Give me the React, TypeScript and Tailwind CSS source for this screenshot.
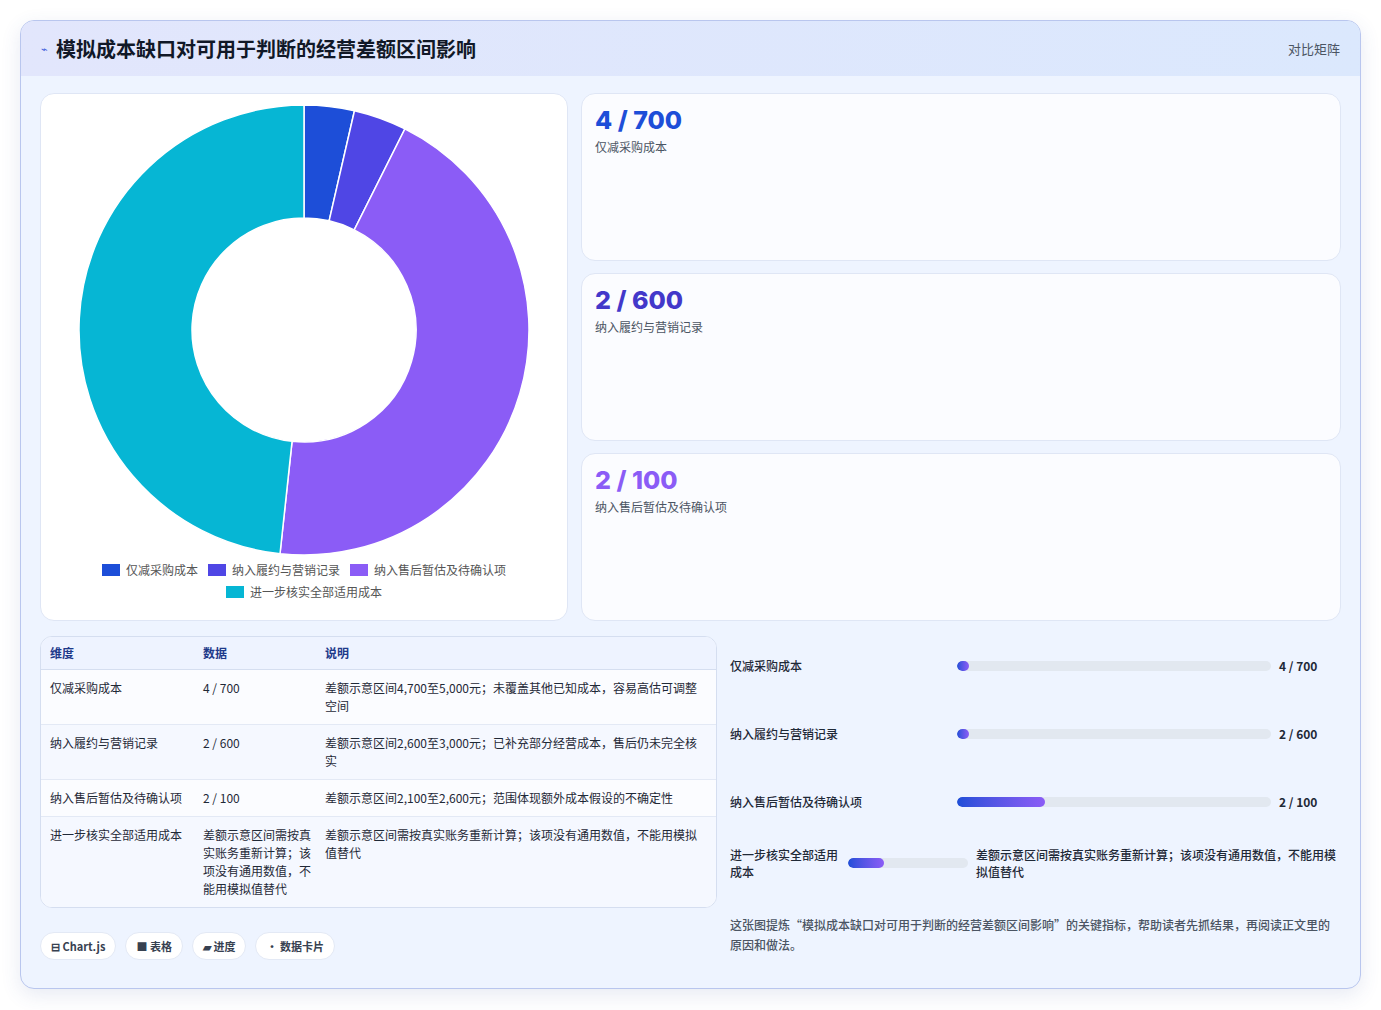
import React from "react";

const F = { fontFamily: '"Noto Sans CJK SC", "Noto Sans", sans-serif' };

function Donut() {
  const cx = 225, cy = 225, R = 225, r = 112;
  const parts = [
    { v: 3.6, c: "#1d4ed8" },
    { v: 3.8, c: "#4f46e5" },
    { v: 44.3, c: "#8b5cf6" },
    { v: 48.3, c: "#06b6d4" },
  ];
  let acc = 0;
  const pt = (a: number, rad: number) => [cx + rad * Math.sin(a), cy - rad * Math.cos(a)];
  return (
    <svg width="450" height="450" viewBox="0 0 450 450">
      {parts.map((p, i) => {
        const a0 = (acc / 100) * Math.PI * 2;
        acc += p.v;
        const a1 = (acc / 100) * Math.PI * 2;
        const large = a1 - a0 > Math.PI ? 1 : 0;
        const [x0, y0] = pt(a0, R), [x1, y1] = pt(a1, R), [x2, y2] = pt(a1, r), [x3, y3] = pt(a0, r);
        return (
          <path key={i} fill={p.c} stroke="#fff" strokeWidth="1.5"
            d={`M${x0},${y0} A${R},${R} 0 ${large} 1 ${x1},${y1} L${x2},${y2} A${r},${r} 0 ${large} 0 ${x3},${y3} Z`} />
        );
      })}
    </svg>
  );
}

const cards = [
  { v: "4 / 700", l: "仅减采购成本", c: "text-[#1d4ed8]" },
  { v: "2 / 600", l: "纳入履约与营销记录", c: "text-[#4338ca]" },
  { v: "2 / 100", l: "纳入售后暂估及待确认项", c: "text-[#8b5cf6]" },
];

const rows = [
  ["仅减采购成本", "4 / 700", "差额示意区间4,700至5,000元；未覆盖其他已知成本，容易高估可调整空间"],
  ["纳入履约与营销记录", "2 / 600", "差额示意区间2,600至3,000元；已补充部分经营成本，售后仍未完全核实"],
  ["纳入售后暂估及待确认项", "2 / 100", "差额示意区间2,100至2,600元；范围体现额外成本假设的不确定性"],
  ["进一步核实全部适用成本", "差额示意区间需按真实账务重新计算；该项没有通用数值，不能用模拟值替代", "差额示意区间需按真实账务重新计算；该项没有通用数值，不能用模拟值替代"],
];

export default function App() {
  return (
    <div style={F} className="w-[1381px] h-[1010px] bg-white pt-[20px] px-[20px]">
      <div className="w-[1341px] h-[969px] rounded-[14px] border border-[#b9c6ee] bg-[#eef4ff] overflow-hidden shadow-[0_6px_20px_rgba(60,80,160,0.12)]">
        <div className="h-[55px] flex items-center justify-between px-[20px] bg-gradient-to-r from-[#e2e6fc] to-[#dbe8fd]">
          <div className="flex items-center gap-[8px]">
            <span className="text-[#3b5bdb] text-[11px]">⌁</span>
            <span className="text-[20px] font-bold text-[#111827]">模拟成本缺口对可用于判断的经营差额区间影响</span>
          </div>
          <span className="text-[13px] text-[#4b5563]">对比矩阵</span>
        </div>
        <div className="px-[19px] pt-[17px]">
          <div className="flex gap-[13px]">
            <div className="w-[528px] h-[528px] bg-white rounded-[14px] border border-[#dfe6f5] flex flex-col items-center pt-[11px]">
              <Donut />
              <div className="mt-[6px] flex flex-wrap justify-center gap-x-[10px] gap-y-[4px] w-[440px] text-[12px] text-[#555]">
                {[["#1d4ed8", "仅减采购成本"], ["#4f46e5", "纳入履约与营销记录"], ["#8b5cf6", "纳入售后暂估及待确认项"], ["#06b6d4", "进一步核实全部适用成本"]].map(([c, t]) => (
                  <span key={t} className="flex items-center gap-[6px] h-[18px]">
                    <span className="w-[18px] h-[12px]" style={{ background: c }} />{t}
                  </span>
                ))}
              </div>
            </div>
            <div className="flex-1 flex flex-col gap-[12px]">
              {cards.map((c) => (
                <div key={c.v} className="h-[168px] bg-[#fbfcff] rounded-[14px] border border-[#dfe6f5] px-[13px] pt-[10px]">
                  <div className={`text-[25px] font-extrabold leading-[32px] ${c.c}`} style={{ fontFamily: "Inter, sans-serif" }}>{c.v}</div>
                  <div className="text-[12px] text-[#4b5563] mt-[2px]">{c.l}</div>
                </div>
              ))}
            </div>
          </div>
          <div className="flex gap-[13px] mt-[15px]">
            <div className="w-[677px]">
              <div className="rounded-[12px] border border-[#d5def0] bg-white overflow-hidden text-[12px] text-[#1f2937]">
                <div className="flex h-[33px] items-center bg-[#eef3ff] border-b border-[#d5def0] font-bold text-[#1e3a8a]">
                  <div className="w-[162px] pl-[9px]">维度</div><div className="w-[122px]">数据</div><div className="flex-1">说明</div>
                </div>
                {rows.map((r, i) => (
                  <div key={i} className={`flex py-[9px] leading-[18px] ${i % 2 ? "bg-[#f5f8ff]" : "bg-[#fbfcff]"} ${i < 3 ? "border-b border-[#e3e9f5]" : ""}`}>
                    <div className="w-[162px] pl-[9px]">{r[0]}</div>
                    <div className="w-[122px] pr-[4px]">{r[1]}</div>
                    <div className="flex-1 pr-[8px]">{r[2]}</div>
                  </div>
                ))}
              </div>
              <div className="flex gap-[9px] mt-[24px] text-[11px] font-bold text-[#374151]">
                {["⊟ Chart.js", "■ 表格", "▰ 进度", "• 数据卡片"].map((t) => (
                  <span key={t} className="h-[28px] px-[10px] flex items-center rounded-full bg-white border border-[#e3e9f5]">{t}</span>
                ))}
              </div>
            </div>
            <div className="flex-1 text-[12px] text-[#1f2937] font-medium">
              {[["仅减采购成本", 3, "4 / 700"], ["纳入履约与营销记录", 3, "2 / 600"], ["纳入售后暂估及待确认项", 28, "2 / 100"]].map(([l, p, v]) => (
                <div key={l as string} className="flex items-center h-[68px] first:mt-[-4px]">
                  <div className="w-[227px]">{l}</div>
                  <div className="w-[314px] h-[10px] rounded-full bg-[#e2e8f0] overflow-hidden">
                    <div className="h-full rounded-full bg-gradient-to-r from-[#1d4ed8] to-[#8b5cf6]" style={{ width: `${p as number}%`, minWidth: 12 }} />
                  </div>
                  <div className="ml-[8px] font-bold">{v}</div>
                </div>
              ))}
              <div className="flex items-center mt-[10px] leading-[17px]">
                <div className="w-[118px]">进一步核实全部适用成本</div>
                <div className="w-[120px] h-[10px] rounded-full bg-[#e2e8f0] overflow-hidden">
                  <div className="h-full w-[30%] rounded-full bg-gradient-to-r from-[#1d4ed8] to-[#8b5cf6]" />
                </div>
                <div className="flex-1 ml-[8px]">差额示意区间需按真实账务重新计算；该项没有通用数值，不能用模拟值替代</div>
              </div>
              <div className="mt-[35px] text-[12px] leading-[20px] text-[#4b5563]">这张图提炼“模拟成本缺口对可用于判断的经营差额区间影响”的关键指标，帮助读者先抓结果，再阅读正文里的原因和做法。</div>
            </div>
          </div>
        </div>
      </div>
    </div>
  );
}
